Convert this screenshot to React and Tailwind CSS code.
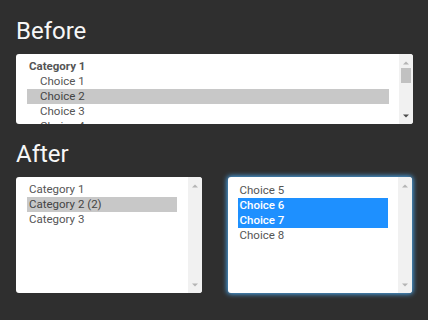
import React from "react";

const Arrow = ({ down, dark }) => (
  <svg width="6" height="4" viewBox="0 0 6 4" className="block">
    <path
      d={down ? "M0 0.5h6L3 3.5z" : "M0 3.5h6L3 0.5z"}
      fill={dark ? "#4a4a4a" : "#b4b4b4"}
    />
  </svg>
);

const Scrollbar = ({ thumb }) => (
  <div className="flex w-[14px] shrink-0 flex-col items-center bg-[#f1f1f1] pt-[7px] pb-[6px]">
    <Arrow />
    {thumb && <div className="mt-[3px] h-[15px] w-[10px] bg-[#c1c1c1]" />}
    <div className="flex-1" />
    <Arrow down dark={thumb} />
  </div>
);

const Row = ({ children, sel, blue, bold, indent }) => {
  let cls = "text-[#555]";
  if (sel) cls = "bg-[#c8c8c8] text-[#444]";
  if (blue) cls = "bg-[#1e90ff] text-white font-medium";
  return (
    <div
      className={`h-[15px] whitespace-nowrap leading-[15px] ${indent ? "pl-[13px]" : "pl-[2px]"} ${bold ? "font-bold text-[#444]" : ""} ${cls}`}
    >
      {children}
    </div>
  );
};

export default function App() {
  return (
    <div className="min-h-[320px] w-[428px] bg-[#2f2f2f] px-4 pt-5 font-['Roboto',sans-serif] text-[11.5px]">
      <h2 className="text-[24px] leading-[23px] text-[#f7f7f7]">Before</h2>
      <div className="mt-[11px] flex h-[70px] w-[397px] overflow-hidden rounded-[3px] bg-white">
        <div className="flex-1 overflow-hidden pl-[11px] pr-[10px] pt-[5px]">
          <Row bold>Category 1</Row>
          <Row indent>Choice 1</Row>
          <Row indent sel>Choice 2</Row>
          <Row indent>Choice 3</Row>
          <Row indent>Choice 4</Row>
        </div>
        <Scrollbar thumb />
      </div>

      <h2 className="mt-[19px] text-[24px] leading-[23px] text-[#f7f7f7]">After</h2>
      <div className="mt-[11px] flex gap-[26px]">
        <div className="flex h-[116px] w-[186px] overflow-hidden rounded-[3px] bg-white">
          <div className="flex-1 overflow-hidden pl-[11px] pr-[11px] pt-[5px]">
            <Row>Category 1</Row>
            <Row sel>Category 2 (2)</Row>
            <Row>Category 3</Row>
          </div>
          <Scrollbar />
        </div>
        <div className="flex h-[116px] w-[185px] overflow-hidden rounded-[3px] bg-white shadow-[0_0_5px_1px_#4aa8f0]">
          <div className="flex-1 overflow-hidden pl-[10px] pr-[10px] pt-[6px]">
            <Row>Choice 5</Row>
            <Row blue>Choice 6</Row>
            <Row blue>Choice 7</Row>
            <Row>Choice 8</Row>
          </div>
          <Scrollbar />
        </div>
      </div>
    </div>
  );
}
